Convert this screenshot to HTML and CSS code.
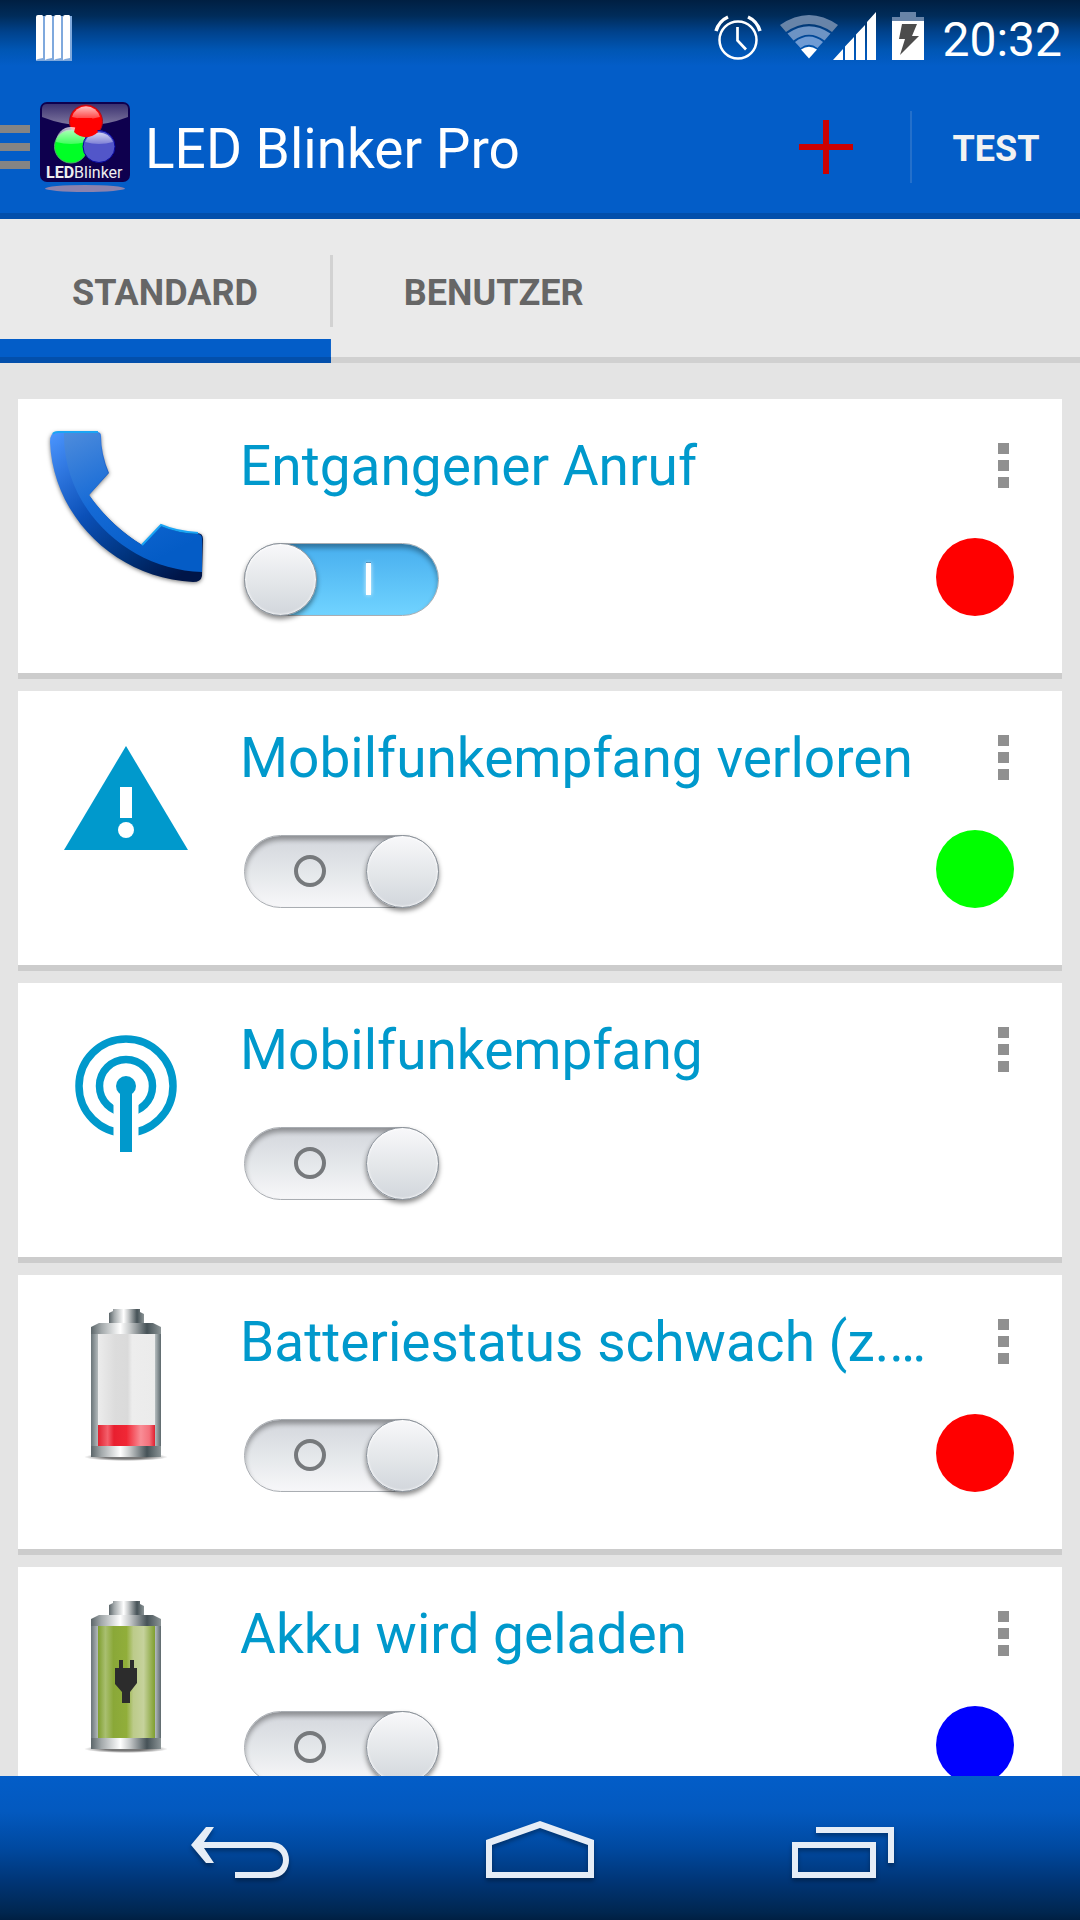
FILE: index.html
```html
<!DOCTYPE html>
<html lang="de">
<head>
<meta charset="utf-8">
<meta name="viewport" content="width=device-width, initial-scale=1">
<title>LED Blinker Pro</title>
<link rel="stylesheet" href="styles.css">
</head>
<body>
<header class="top">
  <div class="status">
    <svg class="status-note" width="36" height="46" viewBox="0 0 36 46" aria-hidden="true">
      <path fill="#7fa9dd" d="M2 1h7v45H0V3zM11 1h7v45H9V3zM20 1h7v45h-9V3zM29 1h7v45h-9V3z"/>
      <path fill="#fff" d="M0 2q0-2 2-2h4q1 0 1 2v41l-5 1-2 1zM9 2q0-2 2-2h4q1 0 1 2v41l-5 1-2 1zM18 2q0-2 2-2h4q1 0 1 2v41l-5 1-2 1zM27 2q0-2 2-2h4q1 0 1 2v41l-5 1-2 1z"/>
    </svg>
    <div class="status-right">
      <svg width="48" height="48" viewBox="0 0 48 48" fill="none" stroke="#fff" aria-hidden="true">
        <circle cx="24" cy="28" r="18.5" stroke-width="2.5"/>
        <path d="M23.5 15v13.5l8.5 9" stroke-width="2.7"/>
        <path d="M2 19Q5 9 14 5M46 19Q43 9 34 5" stroke-width="3.5"/>
      </svg>
      <svg class="status-net" width="96" height="48" viewBox="0 0 96 48" aria-hidden="true">
        <path fill="#6884a8" d="M0 13Q29-7 58 13l-6 7Q29 4 6 20z"/>
        <path fill="#6d93c4" d="M7.5 21.5Q29 7 50.5 21.5l-6 7Q29 17 13.5 28.5z"/>
        <path fill="#6f9bd4" d="M15 30Q29 19 43 30l-5.5 6Q29 29.500 20.500 36z"/>
        <path fill="#fff" d="M21 37.500Q29 32 37 37.500L29 46.500z"/>
        <path fill="#fff" d="M53 48l10-11v11zM65 34.500l9-9.500V48h-9zM76 22.500l9-9.500v35h-9zM87 10l9-10v48h-9z"/>
      </svg>
      <svg class="status-battery" width="32" height="48" viewBox="0 0 32 48" aria-hidden="true">
        <path fill="#6884a8" d="M0 9V5h8V0h16v5h8v4z"/>
        <path fill="#fff" d="M0 9h32v39H0z"/>
        <path fill="#4c4c4c" d="M10 12h15l-5 12h7L8 43l5-16H7z"/>
      </svg>
      <time class="clock">20:32</time>
    </div>
  </div>
  <div class="actionbar">
    <button class="drawer" type="button" aria-label="Menü"><i></i><i></i><i></i></button>
    <svg class="logo" width="92" height="92" viewBox="39 101 92 92" role="img" aria-label="LED Blinker">
      <defs>
        <linearGradient id="gloss" x1="0" y1="0" x2="0" y2="1"><stop offset="0" stop-color="#3b3270"/><stop offset="1" stop-color="#8078a0"/></linearGradient>
        <linearGradient id="shine" x1="0" y1="0" x2="0" y2="1"><stop offset="0" stop-color="#fff" stop-opacity=".75"/><stop offset="1" stop-color="#fff" stop-opacity=".25"/></linearGradient>
      </defs>
      <rect x="40" y="102" width="90" height="80" rx="7" fill="#0e004e"/>
      <path d="M42 117v-8q0-5 5-5h76q5 0 5 5v8q-43 17-86 0z" fill="url(#gloss)"/>
      <circle cx="86" cy="121.5" r="16.5" fill="#f00" stroke="#a8101c"/>
      <path d="M72 117a14.5 14.5 0 0 1 28 0q-14 4-28 0z" fill="url(#shine)"/>
      <circle cx="71" cy="146.5" r="16.5" fill="#00ff26" stroke="#4fb36c"/>
      <path d="M56 142a15 15 0 0 1 30 0q-15 4-30 0z" fill="url(#shine)"/>
      <circle cx="99" cy="146.5" r="16" fill="#5256c9" stroke="#06069c"/>
      <path d="M85 142a15 15 0 0 1 28 0q-14 4-28 0z" fill="url(#shine)"/>
      <path d="M74 132a16.500 16.500 0 0 0 24 0l-6-14H78z" fill="#f00"/>
      <text class="logo-text" x="46" y="178"><tspan class="logo-led">LED</tspan>Blinker</text>
      <ellipse cx="85" cy="188.5" rx="40" ry="3.5" fill="#8b82ad"/>
    </svg>
    <h1 class="title">LED Blinker Pro</h1>
    <button class="add" type="button" aria-label="Hinzufügen">
      <svg width="54" height="54" viewBox="0 0 54 54" aria-hidden="true"><path fill="#c00" d="M24 0h6v24h24v6H30v24h-6V30H0v-6h24z"/></svg>
    </button>
    <button class="test" type="button">TEST</button>
  </div>
</header>

<nav class="tabs" role="tablist" aria-label="Ansicht">
  <button class="tab tab-active" type="button" role="tab" aria-selected="true">STANDARD</button>
  <span class="tab-divider"></span>
  <button class="tab" type="button" role="tab" aria-selected="false">BENUTZER</button>
</nav>

<main class="list">
  <article class="card">
    <svg class="icon" viewBox="0 0 162 162" aria-hidden="true">
      <defs>
        <linearGradient id="rim" x1="0" y1="0" x2=".8" y2="1"><stop offset="0" stop-color="#4c96ff"/><stop offset=".45" stop-color="#0b50b8"/><stop offset=".75" stop-color="#00337c"/><stop offset="1" stop-color="#001548"/></linearGradient>
        <linearGradient id="face" x1="0" y1="0" x2=".5" y2="1"><stop offset="0" stop-color="#4e8cdc"/><stop offset=".5" stop-color="#156ad6"/><stop offset="1" stop-color="#045cc6"/></linearGradient>
      </defs>
      <path class="phone-body" fill="url(#rim)" d="M12 6H52Q56 6 56 10 56 28 64 47L44 69C58 89 76 106 97 119L116 99Q132 106 152 107 158 107 158 113L157 150Q156 156 148 156C70 152 8 90 5 16Q5 6 12 6z"/>
      <path fill="url(#face)" d="M19 7H52Q55 7 55 11 55 28 63 47L44 69C58 89 76 106 97 119L116 100Q132 107 152 108 157 108 157 113V146C84 144 18 84 19 7z"/>
      <path fill="none" stroke="#1aa5f5" stroke-width="2" d="M8 8Q9 6 13 6H53M97 119L116 99Q132 106 153 107"/>
    </svg>
    <h2 class="name"><label for="s1">Entgangener Anruf</label></h2>
    <button class="more" type="button" aria-label="Optionen"><i></i><i></i><i></i></button>
    <input class="switch" id="s1" type="checkbox" role="switch" checked>
    <button class="led led-red" type="button" aria-label="Farbe Rot"></button>
  </article>

  <article class="card">
    <svg class="icon" viewBox="0 0 162 162" aria-hidden="true">
      <path fill="#09c" d="M81 28L143 132H19z"/>
      <path fill="#fff" d="M75 69h12v31H75z"/><circle cx="81" cy="112" r="8" fill="#fff"/>
    </svg>
    <h2 class="name"><label for="s2">Mobilfunkempfang verloren</label></h2>
    <button class="more" type="button" aria-label="Optionen"><i></i><i></i><i></i></button>
    <input class="switch" id="s2" type="checkbox" role="switch">
    <button class="led led-green" type="button" aria-label="Farbe Grün"></button>
  </article>

  <article class="card">
    <svg class="icon" viewBox="0 0 162 162" aria-hidden="true">
      <g fill="none" stroke="#09c" stroke-width="7.5"><circle cx="81" cy="76" r="47"/><circle cx="81" cy="76" r="26.5"/></g>
      <path fill="#fff" d="M68.5 88h25v40h-25z"/>
      <circle cx="81" cy="76" r="10" fill="#09c"/><path fill="#09c" d="M75 78h12v64H75z"/>
    </svg>
    <h2 class="name"><label for="s3">Mobilfunkempfang</label></h2>
    <button class="more" type="button" aria-label="Optionen"><i></i><i></i><i></i></button>
    <input class="switch" id="s3" type="checkbox" role="switch">
  </article>

  <article class="card">
    <svg class="icon" viewBox="0 0 162 162" aria-hidden="true">
      <defs>
        <linearGradient id="metal"><stop offset="0" stop-color="#5c666a"/><stop offset=".15" stop-color="#a3a9ab"/><stop offset=".42" stop-color="#fff"/><stop offset=".55" stop-color="#c9cccd"/><stop offset=".8" stop-color="#465257"/><stop offset="1" stop-color="#8b9496"/></linearGradient>
        <linearGradient id="shell"><stop offset="0" stop-color="#697478"/><stop offset=".1" stop-color="#b4babc"/><stop offset=".5" stop-color="#ccc"/><stop offset=".92" stop-color="#b0b8ba"/><stop offset="1" stop-color="#5c686c"/></linearGradient>
        <linearGradient id="glass"><stop offset="0" stop-color="#ececec"/><stop offset=".3" stop-color="#dcdcdc"/><stop offset=".52" stop-color="#dadada"/><stop offset=".6" stop-color="#ededed"/><stop offset="1" stop-color="#ebebeb"/></linearGradient>
        <linearGradient id="low"><stop offset="0" stop-color="#e0212f"/><stop offset=".17" stop-color="#f4606c"/><stop offset=".28" stop-color="#e81f2f"/><stop offset=".5" stop-color="#f02735"/><stop offset=".75" stop-color="#f98d96"/><stop offset=".9" stop-color="#f4707b"/><stop offset="1" stop-color="#e01f2f"/></linearGradient>
        <linearGradient id="charge"><stop offset="0" stop-color="#7f9f2f"/><stop offset=".13" stop-color="#a9bf70"/><stop offset=".27" stop-color="#8aa838"/><stop offset=".5" stop-color="#91ae3a"/><stop offset=".62" stop-color="#bccb8a"/><stop offset=".8" stop-color="#c6d29c"/><stop offset="1" stop-color="#7f9f2f"/></linearGradient>
        <radialGradient id="ground"><stop offset=".5" stop-color="#777"/><stop offset="1" stop-color="#fff"/></radialGradient>
      </defs>
      <ellipse cx="81" cy="155" rx="42" ry="4" fill="url(#ground)"/>
      <path fill="url(#metal)" d="M64 22V11l4-2V7h27v3l4 2v10z"/>
      <path fill="url(#shell)" d="M46 28h70v122H46z"/>
      <path fill="url(#metal)" d="M46 32v-7l8-4h54l8 4v7zM46 144h70v11H46z"/>
      <path fill="url(#glass)" d="M53 32h57v112H53z"/>
      <path fill="url(#low)" d="M53 123h57v21H53z"/>
    </svg>
    <h2 class="name"><label for="s4">Batteriestatus schwach (z.…</label></h2>
    <button class="more" type="button" aria-label="Optionen"><i></i><i></i><i></i></button>
    <input class="switch" id="s4" type="checkbox" role="switch">
    <button class="led led-red" type="button" aria-label="Farbe Rot"></button>
  </article>

  <article class="card">
    <svg class="icon" viewBox="0 0 162 162" aria-hidden="true">
      <ellipse cx="81" cy="155" rx="42" ry="4" fill="url(#ground)"/>
      <path fill="url(#metal)" d="M64 22V11l4-2V7h27v3l4 2v10z"/>
      <path fill="url(#shell)" d="M46 28h70v122H46z"/>
      <path fill="url(#metal)" d="M46 32v-7l8-4h54l8 4v7zM46 144h70v11H46z"/>
      <path fill="url(#charge)" d="M53 32h57v112H53z"/>
      <path fill="#2c2c2c" d="M70 74h4v-8h4v8h7v-8h4v8h3v15l-7 9v11h-8V98l-7-8z"/>
    </svg>
    <h2 class="name"><label for="s5">Akku wird geladen</label></h2>
    <button class="more" type="button" aria-label="Optionen"><i></i><i></i><i></i></button>
    <input class="switch" id="s5" type="checkbox" role="switch">
    <button class="led led-blue" type="button" aria-label="Farbe Blau"></button>
  </article>
</main>

<footer class="navbar">
  <button class="nav-btn" type="button" aria-label="Zurück">
    <svg class="nav-icon" viewBox="0 0 108 60"><path d="M20 9h8L18 24H85C97 24 103 33 103 42S97 60 85 60H49V54H83C92 54 97 49 97 42S92 30 83 30H18L28 45H20L5 27z"/></svg>
  </button>
  <button class="nav-btn" type="button" aria-label="Startseite">
    <svg class="nav-icon" viewBox="0 0 108 60"><path fill-rule="evenodd" d="M0 22L54 3l54 19v38H0zM6 27v27h96V27L54 10z"/></svg>
  </button>
  <button class="nav-btn" type="button" aria-label="Letzte Apps">
    <svg class="nav-icon" viewBox="0 0 108 60"><path fill-rule="evenodd" d="M6 24h84v36H6zM12 30v24h72V30zM30 9h78v36h-6V15H30z"/></svg>
  </button>
</footer>
</body>
</html>
```
FILE: styles.css
```css
*,
*::before,
*::after {
  box-sizing: border-box;
}

body {
  margin: 0;
  height: 100vh;
  display: flex;
  flex-direction: column;
  background: #e4e4e4;
  font-family: Roboto, "Noto Sans", sans-serif;
}

button {
  margin: 0;
  padding: 0;
  border: 0;
  background: none;
  font: inherit;
  color: inherit;
}

svg {
  display: block;
  flex: none;
}

/* Status bar and action bar */
.top {
  flex: none;
  color: #fff;
  background: linear-gradient(#001f42 0, #002c5a 16px, #00428c 32px, #0056b4 50px, #035dc8 66px);
  border-bottom: 6px solid #034fab;
}

.status {
  height: 75px;
  padding: 12px 18px 0 36px;
  display: flex;
  justify-content: space-between;
  align-items: flex-start;
}

.status-note {
  margin-top: 3px;
}

.status-right {
  display: flex;
}

.status-net {
  margin-left: 18px;
}

.status-battery {
  margin: 0 18px 0 16px;
}

.clock {
  font-size: 48px;
  line-height: 56px;
}

.actionbar {
  height: 138px;
  padding-top: 6px;
  display: flex;
  align-items: center;
}

.drawer {
  width: 30px;
  display: grid;
  gap: 10px;
}

.drawer i {
  height: 8px;
  background: #848484;
}

.logo {
  margin-left: 9px;
}

.logo-text {
  font-size: 16px;
  fill: #eee;
}

.logo-led {
  font-weight: 700;
}

.title {
  flex: 1;
  margin: 0 0 0 14px;
  padding-top: 4px;
  font-size: 55px;
  line-height: 64px;
  font-weight: 400;
  white-space: nowrap;
}

.add {
  width: 168px;
  height: 72px;
  display: grid;
  place-items: center;
}

.test {
  width: 170px;
  height: 72px;
  padding-top: 4px;
  border-left: 2px solid #2470cb;
  font-size: 36px;
  font-weight: 700;
  color: #f2f2f2;
}

/* Tabs */
.tabs {
  flex: none;
  height: 144px;
  display: flex;
  background: #eaeaea;
  box-shadow: inset 0 -6px #d0d0d0;
}

.tab {
  padding: 4px 73px 0 72px;
  font-size: 36px;
  font-weight: 700;
  color: #666;
}

.tab-active {
  background:
    linear-gradient(#034fab, #034fab) bottom / 100% 6px no-repeat,
    linear-gradient(#035dc8, #035dc8) bottom / 100% 24px no-repeat;
}

.tab-divider {
  width: 3px;
  margin: 36px -1px;
  background: #d2d2d2;
}

/* Notification cards */
.list {
  flex: 1;
  min-height: 0;
  overflow: hidden;
  padding: 36px 18px 0;
}

.card {
  display: grid;
  grid-template-columns: 195px 1fr 78px;
  grid-template-rows: 80px 110px;
  padding: 27px 48px 57px 27px;
  margin-bottom: 12px;
  background: #fff;
  border-bottom: 6px solid #ccc;
}

.icon {
  grid-row: 1 / 3;
  width: 162px;
  height: 162px;
}

.phone-body {
  filter: drop-shadow(0 1px 2px #0008);
}

.name {
  margin: 0;
  align-self: center;
  font-size: 55px;
  line-height: 64px;
  font-weight: 400;
  color: #09c;
  white-space: nowrap;
}

.more {
  display: grid;
  align-content: center;
  justify-content: end;
  gap: 6px;
  padding: 0 5px 2px 0;
}

.more i {
  width: 11px;
  height: 11px;
  background: #909090;
}

.switch {
  appearance: none;
  position: relative;
  align-self: end;
  width: 195px;
  height: 73px;
  margin: 0 0 0 4px;
  border: 1px solid #a9adb2;
  border-radius: 37px;
  background: linear-gradient(#d3d6dc, #e4e7ea 50%, #f7f7f9);
  box-shadow: inset 0 4px 5px #0005;
}

.switch::before {
  content: "";
  position: absolute;
  top: -1px;
  right: -1px;
  width: 73px;
  height: 73px;
  border: 1px solid #8b929a;
  border-radius: 50%;
  background: linear-gradient(#f8f8fa, #e3e6e9 55%, #d2d6dc);
  box-shadow: 0 3px 5px #0007, inset 0 0 2px 1px #fffa;
}

.switch::after {
  content: "";
  position: absolute;
  top: 19px;
  left: 49px;
  width: 32px;
  height: 32px;
  border: 4px solid #76797c;
  border-radius: 50%;
}

.switch:checked {
  background: linear-gradient(#47aeee, #70d3ff);
}

.switch:checked::before {
  right: auto;
  left: -1px;
}

.switch:checked::after {
  left: 121px;
  width: 5px;
  border: 0;
  border-radius: 0;
  background: #fff;
  box-shadow: 0 0 4px #fffc, 0 -1px #2270a8;
}

.led {
  align-self: end;
  width: 78px;
  height: 78px;
  border-radius: 50%;
}

.led-red {
  background: #f00;
}

.led-green {
  background: #0f0;
}

.led-blue {
  background: #00f;
}

/* System navigation */
.navbar {
  flex: none;
  height: 144px;
  padding: 0 90px;
  display: flex;
  background: linear-gradient(#035dc8, #0359bf 25%, #0049a0 50%, #003678 72%, #00264f 95%, #001f42);
}

.nav-btn {
  flex: 1;
  display: grid;
  place-items: center;
}

.nav-icon {
  width: 108px;
  height: 60px;
  fill: #e6edf6;
  overflow: visible;
  filter: drop-shadow(0 3px 2px #0005);
}
```
